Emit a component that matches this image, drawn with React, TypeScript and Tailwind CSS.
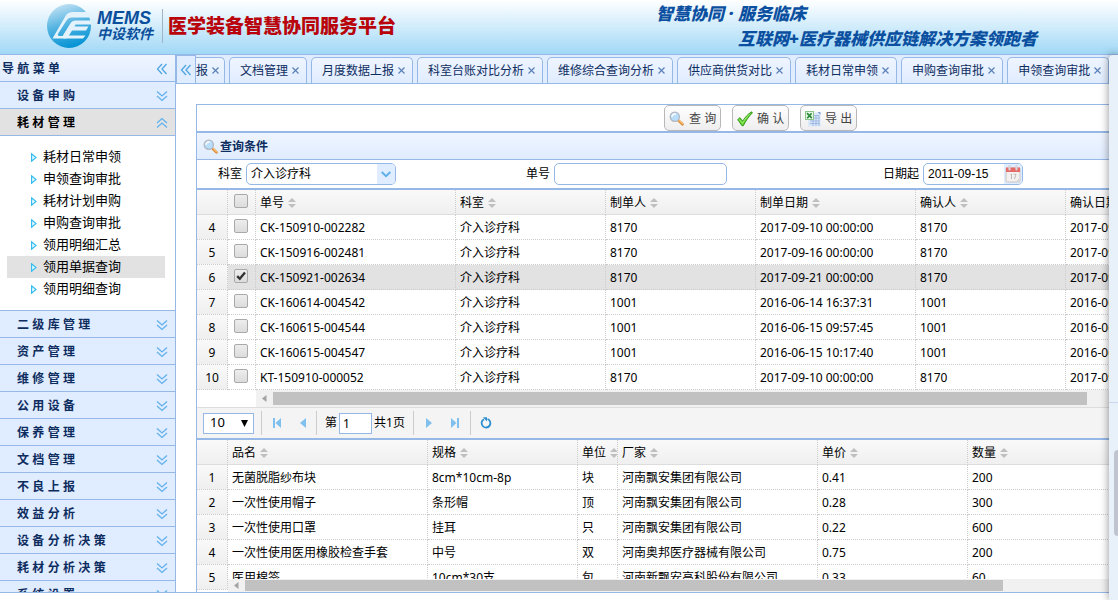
import { ReactNode, useState } from "react";

type Column = { title: string; width: number };

const tabs = [
  "文档管理",
  "月度数据上报",
  "科室台账对比分析",
  "维修综合查询分析",
  "供应商供货对比",
  "耗材日常申领",
  "申购查询审批",
  "申领查询审批",
];

const subMenu = [
  "耗材日常申领",
  "申领查询审批",
  "耗材计划申购",
  "申购查询审批",
  "领用明细汇总",
  "领用单据查询",
  "领用明细查询",
];

const menuBelow = [
  "二 级 库 管 理",
  "资 产 管 理",
  "维 修 管 理",
  "公 用 设 备",
  "保 养 管 理",
  "文 档 管 理",
  "不 良 上 报",
  "效 益 分 析",
  "设 备 分 析 决 策",
  "耗 材 分 析 决 策",
  "系 统 设 置",
];

const billColumns: Column[] = [
  { title: "单号", width: 200 },
  { title: "科室", width: 150 },
  { title: "制单人", width: 150 },
  { title: "制单日期", width: 160 },
  { title: "确认人", width: 150 },
  { title: "确认日期", width: 160 },
];

const bills = [
  { no: 4, code: "CK-150910-002282", user: "8170", date: "2017-09-10 00:00:00" },
  { no: 5, code: "CK-150916-002481", user: "8170", date: "2017-09-16 00:00:00" },
  { no: 6, code: "CK-150921-002634", user: "8170", date: "2017-09-21 00:00:00" },
  { no: 7, code: "CK-160614-004542", user: "1001", date: "2016-06-14 16:37:31" },
  { no: 8, code: "CK-160615-004544", user: "1001", date: "2016-06-15 09:57:45" },
  { no: 9, code: "CK-160615-004547", user: "1001", date: "2016-06-15 10:17:40" },
  { no: 10, code: "KT-150910-000052", user: "8170", date: "2017-09-10 00:00:00" },
];

const itemColumns: Column[] = [
  { title: "品名", width: 200 },
  { title: "规格", width: 150 },
  { title: "单位", width: 40 },
  { title: "厂家", width: 200 },
  { title: "单价", width: 150 },
  { title: "数量", width: 160 },
];

const items = [
  ["无菌脱脂纱布块", "8cm*10cm-8p", "块", "河南飘安集团有限公司", "0.41", "200"],
  ["一次性使用帽子", "条形帽", "顶", "河南飘安集团有限公司", "0.28", "300"],
  ["一次性使用口罩", "挂耳", "只", "河南飘安集团有限公司", "0.22", "600"],
  ["一次性使用医用橡胶检查手套", "中号", "双", "河南奥邦医疗器械有限公司", "0.75", "200"],
  ["医用棉签", "10cm*30支", "包", "河南新飘安高科股份有限公司", "0.33", "60"],
];

const headCell =
  "h-[25px] border-r border-b border-r-[#ccc] border-b-[#ddd] [border-right-style:dotted] px-1 pt-[2px] text-left font-normal whitespace-nowrap overflow-hidden";
const bodyCell =
  "h-[25px] border-r border-b border-dotted border-[#ccc] px-1 pt-[2px] whitespace-nowrap overflow-hidden";
const numberCell =
  "h-[25px] border-r border-b border-dotted border-[#ccc] bg-linear-to-b from-[#f9f9f9] to-[#efefef] pt-[2px] text-center";

const Chevrons = ({ dir }: { dir: "down" | "up" | "left" }) => {
  const rotate = { down: 0, up: 180, left: 90 }[dir];
  return (
    <svg width="12" height="12" viewBox="0 0 12 12" fill="none" className="shrink-0">
      <g
        transform={`rotate(${rotate} 6 6)`}
        stroke={dir === "left" ? "#4fa6e2" : "#62b1ec"}
        strokeWidth="1.3"
      >
        <path d="M1 1.5 6 6 11 1.5" />
        <path d="M1 6 6 10.5 11 6" />
      </g>
    </svg>
  );
};

const Magnifier = () => (
  <svg width="16" height="16" viewBox="0 0 16 16" className="shrink-0">
    <path d="M9.6 9.6 13.5 13.3" stroke="#d9862f" strokeWidth="2.6" strokeLinecap="round" />
    <path d="M10 9.4 13.5 12.8" stroke="#fbc272" strokeWidth="1.2" strokeLinecap="round" />
    <circle cx="5.8" cy="5.8" r="4.6" fill="#b9defb" stroke="#b0b7c2" strokeWidth="1.3" />
    <path d="M3 5.800a3 3 0 0 1 3.800-2.800" stroke="#fff" strokeWidth="1.5" fill="none" />
  </svg>
);

const Tick = () => (
  <svg width="16" height="16" viewBox="0 0 16 16" className="shrink-0">
    <path
      d="M.7 8.6 3 6.7 5.7 10.2C8 6.3 11 3 14.7.8L15.4 1.8C11.6 5.6 8.8 9.9 6.3 14.7H5Z"
      fill="#5fd52b"
      stroke="#2d8f14"
      strokeWidth=".9"
      strokeLinejoin="round"
    />
    <path d="M2.3 8.5 5.6 12.3C8 8 10 5.5 12.5 3.2" fill="none" stroke="#b6f28c" strokeWidth=".8" />
  </svg>
);

const Excel = () => (
  <svg width="16" height="16" viewBox="0 0 16 16" className="shrink-0">
    <path d="M5 1.5H12.5L15.5 4V15.500H3V9Z" fill="#dbe8f9" />
    <path d="M12.5 1H15.5V4Z" fill="#7c9fd3" />
    <path
      d="M9 4.5H14.5M9 7H14.5M5 10H14.5M5 12.5H14.5M8 9V15M11 4V15M14 5V15"
      stroke="#9db9e2"
      strokeWidth="1"
    />
    <rect x=".5" y=".5" width="8" height="8" fill="#e9f7e6" stroke="#8dc48c" />
    <path d="M2 2.2 6.8 7.2M6.6 2.2 2.2 7.2" stroke="#2b8a3a" strokeWidth="1.7" />
  </svg>
);

const Calendar = () => (
  <svg width="16" height="18" viewBox="0 0 16 18" className="shrink-0">
    <rect x="1" y="3" width="14" height="14" rx="1" fill="#f3f1ef" stroke="#c9c5c3" />
    <path d="M1 2.5H15V7H1Z" fill="#e66a66" />
    <path d="M4.5 1V4.5M11.5 1V4.5" stroke="#d4d4da" strokeWidth="2.2" strokeLinecap="round" />
    <path d="M5.5 9.5 6.5 9V14M8.5 9.3H11L9.5 14" fill="none" stroke="#c3b8b8" />
    <path d="M11 16.5 14.5 13V16.5Z" fill="#d9d6d5" />
  </svg>
);

const SortIcon = () => (
  <svg width="8" height="10" viewBox="0 0 8 10" className="shrink-0">
    <path d="M0 4 4 0 8 4ZM0 6H8L4 10Z" fill="#bfbfbf" />
  </svg>
);

const Logo = () => (
  <svg width="46" height="46" viewBox="0 0 46 46">
    <defs>
      <linearGradient id="ball" x1=".3" y1="0" x2=".6" y2="1">
        <stop offset="0" stopColor="#c3e2f4" />
        <stop offset=".45" stopColor="#56b5e2" />
        <stop offset="1" stopColor="#0091d4" />
      </linearGradient>
    </defs>
    <circle cx="23" cy="23" r="22" fill="url(#ball)" />
    <path
      d="M43.500 9H27C23.500 9 21.500 10 19.500 13L6.500 35.500H20L22 33H14C11.500 33 11.500 32 12.500 30L20.500 17.500C22 15.500 23 14.500 26 14.500H45.500Z"
      fill="#e4f3fb"
    />
    <path
      d="M45 17.500H30C27 17.500 25.500 18.500 24 21L17.500 31.500C15.800 34.500 16.500 35.500 19 35.500H37L39.500 32.500H23L26 27.500H40L42.500 23.500H28.500L29.500 21.500H45Z"
      fill="#e4f3fb"
    />
  </svg>
);

const Check = ({ checked, label }: { checked?: boolean; label: string }) => (
  <span className="relative -mt-1 ml-[2px] block size-[14px]">
    <input
      type="checkbox"
      aria-label={label}
      defaultChecked={checked}
      className="peer block size-[14px] appearance-none rounded-[2px] border border-[#a9a9a9] bg-linear-to-b from-[#ededed] to-[#dcdcdc]"
    />
    <svg
      viewBox="0 0 14 14"
      className="pointer-events-none absolute inset-0 hidden size-[14px] peer-checked:block"
    >
      <path d="M3.2 7.2 5.8 9.8 11 3.6" fill="none" stroke="#333" strokeWidth="2.4" />
    </svg>
  </span>
);

const HeadTitle = ({ title }: { title: string }) => (
  <span className="flex items-center gap-1">
    {title}
    <SortIcon />
  </span>
);

const ScrollBar = ({ thumb, size }: { thumb: string; size: string }) => (
  <div className={`flex items-center bg-[#f1f1f1] ${size}`}>
    <svg width="17" height="9" viewBox="0 0 17 9" className="shrink-0">
      <path d="M10.5 1V8L6 4.5Z" fill="#a3a3a3" />
    </svg>
    <div className={`bg-[#c1c1c1] ${thumb}`} />
  </div>
);

const ToolButton = ({ icon, text }: { icon: ReactNode; text: string }) => (
  <button className="flex h-[26px] w-[57px] items-center gap-1 rounded-[5px] border border-[#b8b8b8] bg-linear-to-b from-white to-[#eee] pt-[2px] pl-1 font-['Liberation_Sans','Noto_Sans_CJK_SC',sans-serif] text-xs whitespace-nowrap text-[#444]">
    {icon}
    {text}
  </button>
);

const MenuTitle = ({ text, open }: { text: string; open?: boolean }) => (
  <button
    className={`flex h-[27px] w-full shrink-0 items-center justify-between border-b border-[#95b8e7] pt-[2px] pr-[7px] pl-[17px] text-xs font-bold ${
      open ? "bg-[#e2e2e2] text-black" : "bg-[#e0ecff] text-[#0e2d5f]"
    }`}
  >
    {text}
    <Chevrons dir={open ? "up" : "down"} />
  </button>
);

const Header = () => (
  <header className="flex h-[55px] shrink-0 justify-between border-b border-[#95b8e7] bg-linear-to-b from-white to-[#a0d8f6] pt-[3px] pl-[46px]">
    <div className="flex">
      <Logo />
      <div className="ml-[5px] pt-[7px] font-bold text-[#0b4f9c] italic">
        <p className="font-['Liberation_Sans',sans-serif] text-lg/[17px]">MEMS</p>
        <p className="text-sm/[14px]">中设软件</p>
      </div>
      <div className="mt-[6px] ml-[9px] h-[34px] w-px bg-[#9fb4c4]" />
      <h1 className="ml-[5px] pt-[9px] text-[19px]/[28px] font-black whitespace-nowrap text-[#b8040a]">
        医学装备智慧协同服务平台
      </h1>
    </div>
    <div className="mr-[72px] w-[390px] text-[17px]/[25px] font-black whitespace-nowrap text-[#0b50a0] italic">
      <p className="-mt-[2px]">智慧协同 · 服务临床</p>
      <p className="pl-[82px]">互联网+医疗器械供应链解决方案领跑者</p>
    </div>
  </header>
);

const Sidebar = () => (
  <nav className="flex w-44 shrink-0 flex-col overflow-hidden border-r border-[#95b8e7] font-['Liberation_Sans','Noto_Sans_CJK_SC',sans-serif]">
    <div className="flex h-[27px] shrink-0 items-center justify-between border-b border-[#95b8e7] bg-linear-to-b from-[#eff5ff] to-[#e0ecff] pt-[2px] pr-[7px] pl-[2px] text-xs font-bold text-[#0e2d5f]">
      <h2>导 航 菜 单</h2>
      <Chevrons dir="left" />
    </div>
    <MenuTitle text="设 备 申 购" />
    <MenuTitle text="耗 材 管 理" open />
    <ul className="shrink-0 border-b border-[#95b8e7] bg-white py-[10px] pr-[10px] pl-[7px]">
      {subMenu.map((name) => (
        <li key={name}>
          <a
            href="#"
            className={`flex h-[22px] items-center gap-[6px] pl-6 text-[13px] ${
              name === "领用单据查询" ? "bg-[#e2e2e2]" : ""
            }`}
          >
            <svg width="6" height="9" viewBox="0 0 6 9">
              <path d="M.6.8V8.2L5 4.5Z" fill="#eafaff" stroke="#35bdf0" strokeWidth="1.2" />
            </svg>
            {name}
          </a>
        </li>
      ))}
    </ul>
    {menuBelow.map((name) => (
      <MenuTitle key={name} text={name} />
    ))}
  </nav>
);

const tabClass =
  "flex h-[26px] shrink-0 items-center gap-1 rounded-t-[5px] border border-b-0 border-[#95b8e7] bg-linear-to-b from-[#eff5ff] to-[#e0ecff] text-xs whitespace-nowrap text-[#0e2d5f]";

const TabClose = () => (
  <svg width="7" height="7" viewBox="0 0 7 7" className="shrink-0">
    <path d="M.5.5 6.5 6.5M6.5.5.5 6.5" stroke="#5b81b8" strokeWidth="1.2" />
  </svg>
);

const TabStrip = () => (
  <div className="flex h-[29px] shrink-0 items-end overflow-hidden border-b border-[#95b8e7] bg-[#e0ecff]">
    <button
      aria-label="向左滚动"
      className="flex h-7 w-5 shrink-0 items-center justify-center border border-b-0 border-[#95b8e7] bg-[#e0ecff]"
    >
      <Chevrons dir="left" />
    </button>
    <div className="flex gap-1">
      <button className={`${tabClass} rounded-tl-none border-l-0 pr-[5px]`}>
        报
        <TabClose />
      </button>
      {tabs.map((name) => (
        <button key={name} className={`${tabClass} pr-[7px] pl-[10px]`}>
          {name}
          <TabClose />
        </button>
      ))}
    </div>
  </div>
);

const fieldClass = "h-[22px] rounded-[5px] border border-[#95b8e7] bg-white text-xs outline-none";

const SearchForm = () => (
  <form className="grid h-[28px] shrink-0 grid-cols-[308px_357px_1fr] items-center pl-[21px]">
    <div className="flex items-center gap-1">
      <label htmlFor="dept">科室</label>
      <div className="relative">
        <select id="dept" className={`${fieldClass} w-[150px] appearance-none pl-1`}>
          <option>介入诊疗科</option>
        </select>
        <span className="pointer-events-none absolute top-px right-px flex h-5 w-[18px] items-center justify-center rounded-r bg-[#e0ecff]">
          <svg width="10" height="7" viewBox="0 0 10 7">
            <path d="M.7 1 5 5.2 9.3 1" fill="none" stroke="#5eb1e8" strokeWidth="2" />
          </svg>
        </span>
      </div>
    </div>
    <div className="flex items-center gap-1">
      <label htmlFor="code">单号</label>
      <input id="code" className={`${fieldClass} w-[173px] px-1`} />
    </div>
    <div className="flex items-center gap-1">
      <label htmlFor="from">日期起</label>
      <div className="relative">
        <input
          id="from"
          defaultValue="2011-09-15"
          className={`${fieldClass} w-[100px] pl-1 font-['Liberation_Sans',sans-serif]`}
        />
        <span className="pointer-events-none absolute top-px right-px flex h-5 w-[18px] items-center justify-center rounded-r bg-[#e0ecff]">
          <Calendar />
        </span>
      </div>
    </div>
  </form>
);

const BillTable = () => (
  <table className="w-[1029px] table-fixed border-separate border-spacing-0">
    <colgroup>
      <col className="w-[31px]" />
      <col className="w-[28px]" />
      {billColumns.map((c) => (
        <col key={c.title} style={{ width: c.width }} />
      ))}
    </colgroup>
    <thead className="bg-linear-to-b from-[#f9f9f9] to-[#efefef]">
      <tr>
        <th className={headCell} />
        <th className={headCell}>
          <Check label="全选" />
        </th>
        {billColumns.map((c) => (
          <th key={c.title} className={headCell}>
            <HeadTitle title={c.title} />
          </th>
        ))}
      </tr>
    </thead>
    <tbody>
      {bills.map((b) => (
        <tr key={b.no} className={b.no === 6 ? "bg-[#e2e2e2]" : ""}>
          <td className={numberCell}>{b.no}</td>
          <td className={bodyCell}>
            <Check label={b.code} checked={b.no === 6} />
          </td>
          <td className={bodyCell}>{b.code}</td>
          <td className={bodyCell}>介入诊疗科</td>
          <td className={bodyCell}>{b.user}</td>
          <td className={bodyCell}>{b.date}</td>
          <td className={bodyCell}>{b.user}</td>
          <td className={bodyCell}>{b.date}</td>
        </tr>
      ))}
    </tbody>
  </table>
);

const ItemTable = () => (
  <table className="w-[931px] table-fixed border-separate border-spacing-0">
    <colgroup>
      <col className="w-[31px]" />
      {itemColumns.map((c) => (
        <col key={c.title} style={{ width: c.width }} />
      ))}
    </colgroup>
    <thead className="bg-linear-to-b from-[#f9f9f9] to-[#efefef]">
      <tr>
        <th className={headCell} />
        {itemColumns.map((c) => (
          <th key={c.title} className={headCell}>
            <HeadTitle title={c.title} />
          </th>
        ))}
      </tr>
    </thead>
    <tbody>
      {items.map((row, idx) => (
        <tr key={idx}>
          <td className={numberCell}>{idx + 1}</td>
          {row.map((cell, i) => (
            <td key={i} className={bodyCell}>
              {cell}
            </td>
          ))}
        </tr>
      ))}
    </tbody>
  </table>
);

const Separator = () => <span className="h-6 w-px bg-[#ccc]" />;

const PageButton = ({ label, path }: { label: string; path: string }) => (
  <button aria-label={label} className="flex w-[26px] justify-center">
    <svg width="10" height="10" viewBox="0 0 10 10">
      <path d={path} fill="#7fc0ee" />
    </svg>
  </button>
);

const Pager = () => {
  const [page, setPage] = useState("1");

  return (
    <div className="flex h-[31px] shrink-0 items-center border-t border-[#ddd] bg-[#f4f4f4] pl-[6px]">
      <div className="relative">
        <select
          aria-label="每页条数"
          className="block h-[21px] w-[51px] appearance-none border border-[#95b8e7] bg-white pl-[6px] text-[13px]"
        >
          <option>10</option>
        </select>
        <svg
          width="7"
          height="7"
          viewBox="0 0 7 7"
          className="pointer-events-none absolute top-[7px] right-[6px]"
        >
          <path d="M0 0H7L3.5 7Z" fill="#000" />
        </svg>
      </div>
      <div className="mr-[2px] ml-[7px] flex">
        <Separator />
      </div>
      <PageButton label="首页" path="M1 0H3V10H1ZM9 0V10L3.5 5Z" />
      <PageButton label="上一页" path="M8 0V10L2 5Z" />
      <Separator />
      <label htmlFor="page" className="ml-2">
        第
      </label>
      <input
        id="page"
        value={page}
        onChange={(e) => setPage(e.target.value)}
        className="mx-[2px] h-[21px] w-[33px] border border-[#95b8e7] bg-white pl-[3px] text-xs"
      />
      <span className="mr-2">共1页</span>
      <Separator />
      <div className="mx-[2px] flex">
        <PageButton label="下一页" path="M2 0V10L8 5Z" />
        <PageButton label="末页" path="M1 0V10L6.5 5ZM7 0H9V10H7Z" />
      </div>
      <Separator />
      <button aria-label="刷新" className="ml-[9px]">
        <svg width="12" height="12" viewBox="0 0 12 12">
          <path d="M7.5 2A4.4 4.4 0 1 1 4 2.2" fill="none" stroke="#2a8fd0" strokeWidth="1.8" />
          <path d="M3 .3H7V4.5Z" fill="#2a8fd0" />
        </svg>
      </button>
    </div>
  );
};

const App = () => {
  return (
    <div className="relative flex h-screen flex-col overflow-hidden bg-white pb-[7px] font-['Noto_Sans','Noto_Sans_CJK_SC',sans-serif] text-xs text-black">
      <Header />
      <div className="flex min-h-0 flex-1 border-b border-[#95b8e7]">
        <Sidebar />
        <main className="flex min-w-0 flex-1 flex-col">
          <TabStrip />
          <section className="mt-5 ml-5 flex min-h-0 flex-1 flex-col overflow-hidden border-t border-l border-[#95b8e7]">
            <div className="flex shrink-0 gap-[11px] border-b-2 border-[#95b8e7] pl-[467px]">
              <ToolButton icon={<Magnifier />} text="查 询" />
              <ToolButton icon={<Tick />} text="确 认" />
              <ToolButton icon={<Excel />} text="导 出" />
            </div>
            <h2 className="flex h-[27px] shrink-0 items-center gap-px border-b border-[#95b8e7] bg-linear-to-b from-[#eff5ff] to-[#e0ecff] pt-px pl-[6px] font-bold text-[#0e2d5f]">
              <Magnifier />
              查询条件
            </h2>
            <SearchForm />
            <div className="shrink-0 overflow-hidden border-t-2 border-[#95b8e7]">
              <BillTable />
              <div className="pl-[59px]">
                <ScrollBar size="h-[17px]" thumb="h-[13px] w-[814px]" />
              </div>
            </div>
            <Pager />
            <div className="relative min-h-0 flex-1 overflow-hidden border-t-2 border-[#95b8e7]">
              <ItemTable />
              <div className="absolute right-0 bottom-0 left-[31px]">
                <ScrollBar size="h-[13px]" thumb="h-[11px] w-[758px]" />
              </div>
            </div>
          </section>
        </main>
      </div>
      <aside className="absolute top-[55px] right-0 bottom-0 w-[9px] rounded-tl bg-[#e8f0f9] shadow-[0_0_8px_rgba(0,0,0,0.45)]">
        <div className="h-[348px] border-b border-[#c9d5ea]" />
        <div className="mt-[47px] ml-[5px] h-[86px] rounded-l bg-[#c0c4d0]" />
      </aside>
    </div>
  );
};

export default App;
